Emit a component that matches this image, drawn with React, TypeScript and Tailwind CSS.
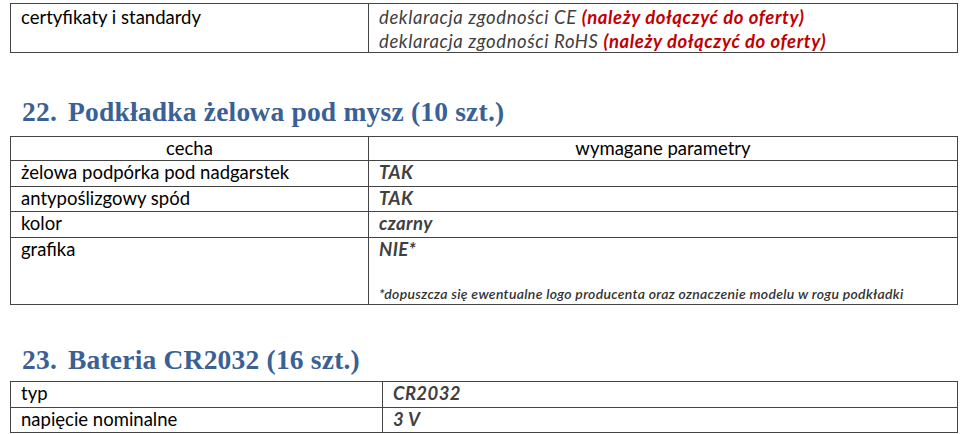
import React from 'react';

const body = { fontFamily: 'Lato, "Open Sans", sans-serif' };
const head = { fontFamily: '"Liberation Serif", "DejaVu Serif", serif' };

function Heading({ num, text }: { num: string; text: string }) {
  return (
    <h2 style={head} className="flex h-[28px] items-center pl-[22px] text-[27.5px] font-bold leading-none tracking-[0.2px] text-[#3a6196]">
      <span className="w-[46px]">{num}</span>
      <span>{text}</span>
    </h2>
  );
}

const rows2 = [
  { k: 'żelowa podpórka pod nadgarstek', v: 'TAK', h: 'h-[26px]' },
  { k: 'antypoślizgowy spód', v: 'TAK', h: 'h-[25px]' },
  { k: 'kolor', v: 'czarny', h: 'h-[26px]' },
];

export default function App() {
  return (
    <div style={body} className="w-[960px] h-[434px] overflow-hidden bg-white pt-[3px] text-[18.5px] text-black">
      {/* certyfikaty */}
      <div className="ml-[10px] grid h-[50px] w-[948px] grid-cols-[357px_1fr] border-[1.5px] border-[#444]">
        <div className="pl-[10px] pt-[1px] leading-[24px]">certyfikaty i standardy</div>
        <div className="border-l-[1.5px] border-[#444] pl-[10px] pt-[1px] leading-[24px] italic tracking-[0.6px] text-[#404040]">
          <div>
            deklaracja zgodności CE <span className="font-bold text-[#c00000]">(należy dołączyć do oferty)</span>
          </div>
          <div>
            deklaracja zgodności RoHS <span className="font-bold text-[#c00000]">(należy dołączyć do oferty)</span>
          </div>
        </div>
      </div>

      <div className="mt-[45px]">
        <Heading num="22." text="Podkładka żelowa pod mysz (10 szt.)" />
      </div>

      {/* 22 */}
      <div className="mt-[10px] ml-[10px] w-[948px] border-[1.5px] border-[#444]">
        <div className="grid h-[22.5px] grid-cols-[357px_1fr] leading-[22px]">
          <div className="text-center">cecha</div>
          <div className="border-l-[1.5px] border-[#444] text-center">wymagane parametry</div>
        </div>
        {rows2.map(r => (
          <div key={r.k} className={`grid ${r.h} grid-cols-[357px_1fr] border-t-[1.5px] border-[#444] leading-[23px]`}>
            <div className="pl-[10px]">{r.k}</div>
            <div className="border-l-[1.5px] border-[#444] pl-[10px] font-bold italic tracking-[0.4px] text-[#404040]">{r.v}</div>
          </div>
        ))}
        <div className="grid h-[67.5px] grid-cols-[357px_1fr] border-t-[1.5px] border-[#444]">
          <div className="pl-[10px] leading-[23px]">grafika</div>
          <div className="flex flex-col justify-between border-l-[1.5px] border-[#444] pl-[10px]">
            <div className="font-bold italic leading-[23px] tracking-[0.4px] text-[#404040]">NIE*</div>
            <div className="pb-[1px] text-[14px] font-semibold italic leading-[18px] tracking-[0.3px] text-[#333]">
              *dopuszcza się ewentualne logo producenta oraz oznaczenie modelu w rogu podkładki
            </div>
          </div>
        </div>
      </div>

      <div className="mt-[41px]">
        <Heading num="23." text="Bateria CR2032 (16 szt.)" />
      </div>

      {/* 23 */}
      <div className="mt-[7px] ml-[10px] w-[948px] border-[1.5px] border-[#444]">
        <div className="grid h-[24.5px] grid-cols-[371px_1fr] leading-[23px]">
          <div className="pl-[10px]">typ</div>
          <div className="border-l-[1.5px] border-[#444] pl-[10px] font-bold italic tracking-[0.4px] text-[#404040]">CR2032</div>
        </div>
        <div className="grid h-[25px] grid-cols-[371px_1fr] border-t-[1.5px] border-[#444] leading-[23px]">
          <div className="pl-[10px]">napięcie nominalne</div>
          <div className="border-l-[1.5px] border-[#444] pl-[10px] font-bold italic tracking-[0.4px] text-[#404040]">3 V</div>
        </div>
      </div>
    </div>
  );
}
